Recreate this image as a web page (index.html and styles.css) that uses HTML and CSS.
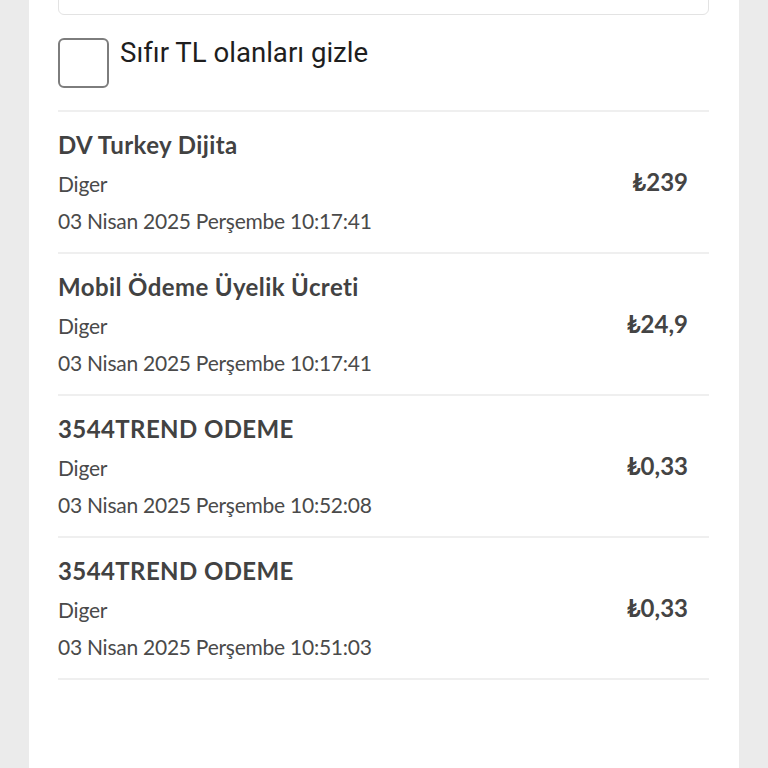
FILE: index.html
```html
<!DOCTYPE html>
<html lang="tr">
<head>
<meta charset="utf-8">
<title>Harcamalar</title>
<link rel="stylesheet" href="styles.css">
</head>
<body>
<div class="card">
  <div class="search"></div>
  <label class="filter">
    <span class="box"></span>
    <span class="filter-text">Sıfır TL olanları gizle</span>
  </label>
  <ul class="list">
    <li class="row">
      <div class="info">
        <div class="title">DV Turkey Dijita</div>
        <div class="sub">Diger</div>
        <div class="date">03 Nisan 2025 Perşembe 10:17:41</div>
      </div>
      <div class="price">₺239</div>
    </li>
    <li class="row">
      <div class="info">
        <div class="title">Mobil Ödeme Üyelik Ücreti</div>
        <div class="sub">Diger</div>
        <div class="date">03 Nisan 2025 Perşembe 10:17:41</div>
      </div>
      <div class="price">₺24,9</div>
    </li>
    <li class="row">
      <div class="info">
        <div class="title">3544TREND ODEME</div>
        <div class="sub">Diger</div>
        <div class="date">03 Nisan 2025 Perşembe 10:52:08</div>
      </div>
      <div class="price">₺0,33</div>
    </li>
    <li class="row">
      <div class="info">
        <div class="title">3544TREND ODEME</div>
        <div class="sub">Diger</div>
        <div class="date">03 Nisan 2025 Perşembe 10:51:03</div>
      </div>
      <div class="price">₺0,33</div>
    </li>
  </ul>
</div>
</body>
</html>
```
FILE: styles.css
```css
* { box-sizing: border-box; }
html, body { margin: 0; padding: 0; }
body {
  background: #ebebeb;
  font-family: "Lato", "DejaVu Sans", sans-serif;
  overflow: hidden;
}
.card {
  display: flow-root;
  margin: 0 29px;
  min-height: 768px;
  background: #ffffff;
  padding: 0 30px 0 29px;
}
.search {
  height: 50px;
  margin-top: -35px;
  border: 1px solid #e3e3e3;
  border-radius: 6px;
  background: #fff;
}
.filter {
  display: flex;
  align-items: flex-start;
  gap: 11px;
  margin-top: 23px;
  margin-bottom: 22px;
}
.box {
  width: 51px;
  height: 50px;
  border: 2px solid #7d7d7d;
  border-radius: 6px;
  flex: none;
}
.filter-text {
  font-family: "Roboto", sans-serif;
  font-size: 27.6px;
  line-height: 30px;
  color: #1e1e1e;
}
.list {
  list-style: none;
  margin: 0;
  padding: 0;
  border-top: 2px solid #efefef;
}
.row {
  display: flex;
  align-items: center;
  justify-content: space-between;
  padding: 18px 21px 13px 0;
  border-bottom: 2px solid #efefef;
}
.title {
  font-size: 24px;
  line-height: 30px;
  font-weight: 700;
  letter-spacing: 0.4px;
  color: #424242;
}
.sub {
  margin-top: 6px;
  font-size: 21px;
  line-height: 36px;
  letter-spacing: -0.2px;
  color: #4a4a4a;
}
.date {
  margin-top: 1px;
  font-size: 21px;
  line-height: 36px;
  letter-spacing: -0.25px;
  color: #4a4a4a;
}
.price {
  margin-bottom: 6px;
  font-size: 24px;
  font-weight: 700;
  color: #444;
}
```
